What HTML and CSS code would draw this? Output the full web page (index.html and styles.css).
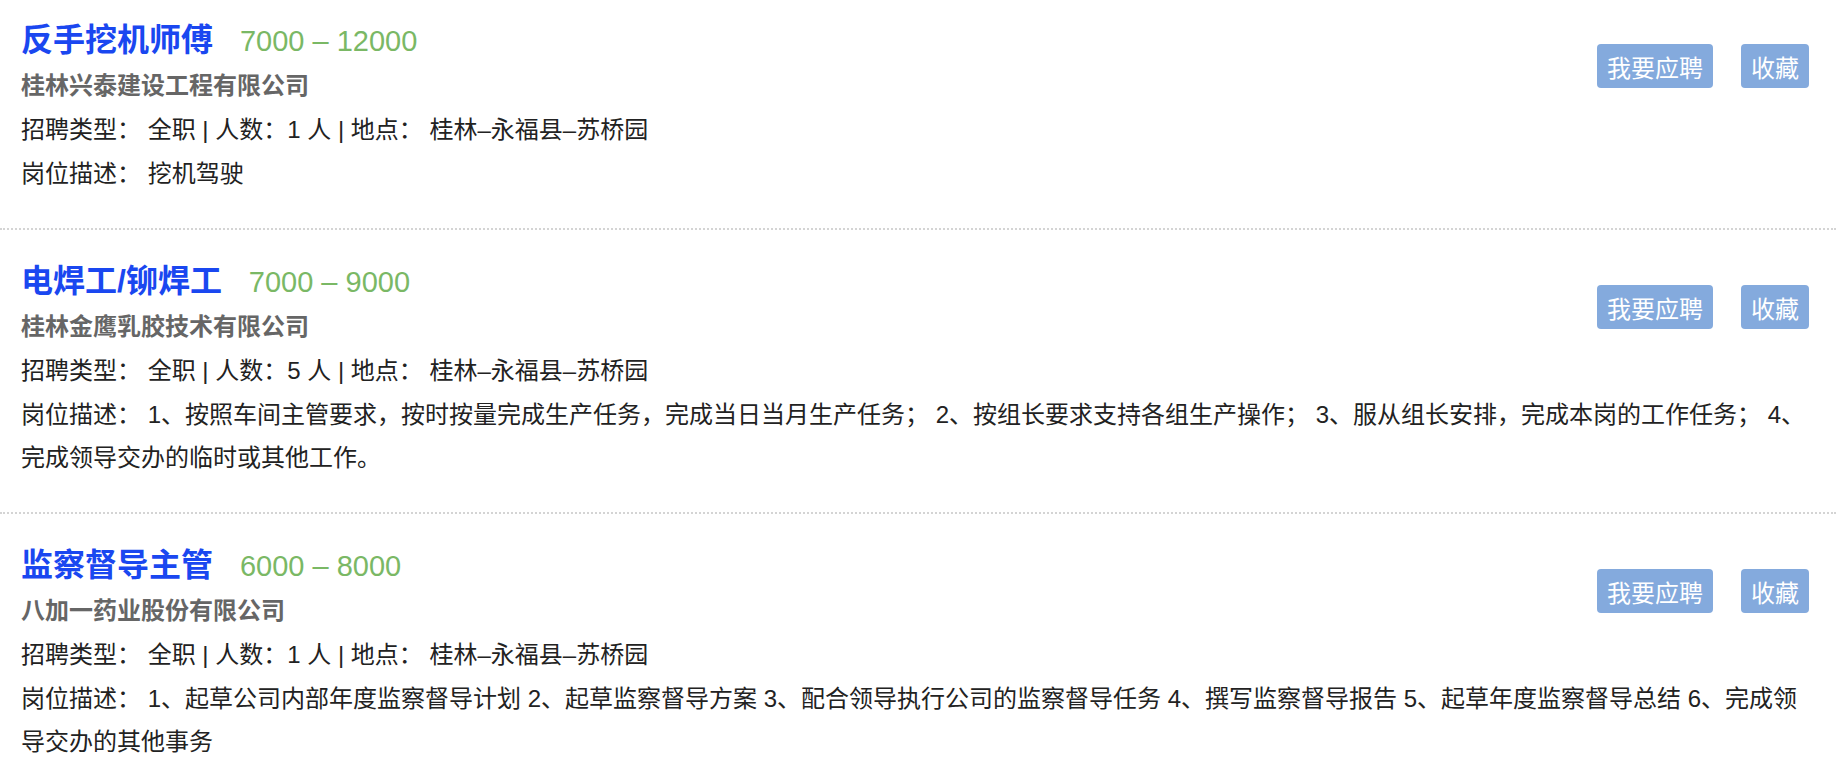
FILE: index.html
```html
<!DOCTYPE html>
<html lang="zh-CN">
<head>
    <meta charset="UTF-8">
    <meta name="viewport" content="width=device-width, initial-scale=1.0">
    <title>招聘信息</title>
    <link rel="stylesheet" href="styles.css">
</head>
<body>

<!-- 职位列表 -->
<div class="job-list">

    <div class="job-item">
        <div class="job-head">
            <div class="job-main">
                <h2 class="job-title">反手挖机师傅 <span class="job-salary">7000 – 12000</span></h2>
                <p class="job-company">桂林兴泰建设工程有限公司</p>
                <p class="job-info">招聘类型： 全职 | 人数：1 人 | 地点： 桂林–永福县–苏桥园</p>
            </div>
            <div class="job-actions">
                <button class="job-button">我要应聘</button>
                <button class="job-button">收藏</button>
            </div>
        </div>
        <p class="job-desc">岗位描述： 挖机驾驶</p>
    </div>

    <div class="job-item">
        <div class="job-head">
            <div class="job-main">
                <h2 class="job-title">电焊工/铆焊工 <span class="job-salary">7000 – 9000</span></h2>
                <p class="job-company">桂林金鹰乳胶技术有限公司</p>
                <p class="job-info">招聘类型： 全职 | 人数：5 人 | 地点： 桂林–永福县–苏桥园</p>
            </div>
            <div class="job-actions">
                <button class="job-button">我要应聘</button>
                <button class="job-button">收藏</button>
            </div>
        </div>
        <p class="job-desc">岗位描述： 1、按照车间主管要求，按时按量完成生产任务，完成当日当月生产任务； 2、按组长要求支持各组生产操作； 3、服从组长安排，完成本岗的工作任务； 4、完成领导交办的临时或其他工作。</p>
    </div>

    <div class="job-item">
        <div class="job-head">
            <div class="job-main">
                <h2 class="job-title">监察督导主管 <span class="job-salary">6000 – 8000</span></h2>
                <p class="job-company">八加一药业股份有限公司</p>
                <p class="job-info">招聘类型： 全职 | 人数：1 人 | 地点： 桂林–永福县–苏桥园</p>
            </div>
            <div class="job-actions">
                <button class="job-button">我要应聘</button>
                <button class="job-button">收藏</button>
            </div>
        </div>
        <p class="job-desc">岗位描述： 1、起草公司内部年度监察督导计划 2、起草监察督导方案 3、配合领导执行公司的监察督导任务 4、撰写监察督导报告 5、起草年度监察督导总结 6、完成领导交办的其他事务</p>
    </div>

</div>

</body>
</html>
```

FILE: styles.css
```css
body {
    font-family: "Liberation Sans", "Noto Sans CJK SC", sans-serif;
    color: #222;
    background: #fff;
    margin: 0;
}

/* 职位条目 */
.job-item {
    padding: 28px 27px 33px 21px;
    border-bottom: 2px dotted #d4d4d4;
}

.job-item:first-child {
    padding-top: 17px;
}

.job-head {
    display: flex;
    justify-content: space-between;
    align-items: flex-start;
}

.job-title {
    margin: 0;
    font-size: 32px;
    line-height: 46px;
    font-weight: bold;
    color: #1a47f0;
}

.job-salary {
    margin-left: 18px;
    font-size: 29px;
    font-weight: normal;
    color: #7ab865;
}

.job-company {
    margin: 0;
    font-size: 24px;
    line-height: 44px;
    font-weight: bold;
    color: #666;
}

.job-info {
    margin: 0;
    font-size: 24px;
    line-height: 44px;
}

.job-desc {
    margin: 0;
    font-size: 24px;
    line-height: 43px;
}

/* 按钮 */
.job-actions {
    display: flex;
    gap: 28px;
    padding-top: 27px;
}

.job-button {
    height: 44px;
    padding: 0 10px;
    border: none;
    border-radius: 4px;
    background: #84aadd;
    color: #fff;
    font-family: inherit;
    font-size: 24px;
    cursor: pointer;
}

.job-button:hover {
    background: #6f98d2;
}
```
